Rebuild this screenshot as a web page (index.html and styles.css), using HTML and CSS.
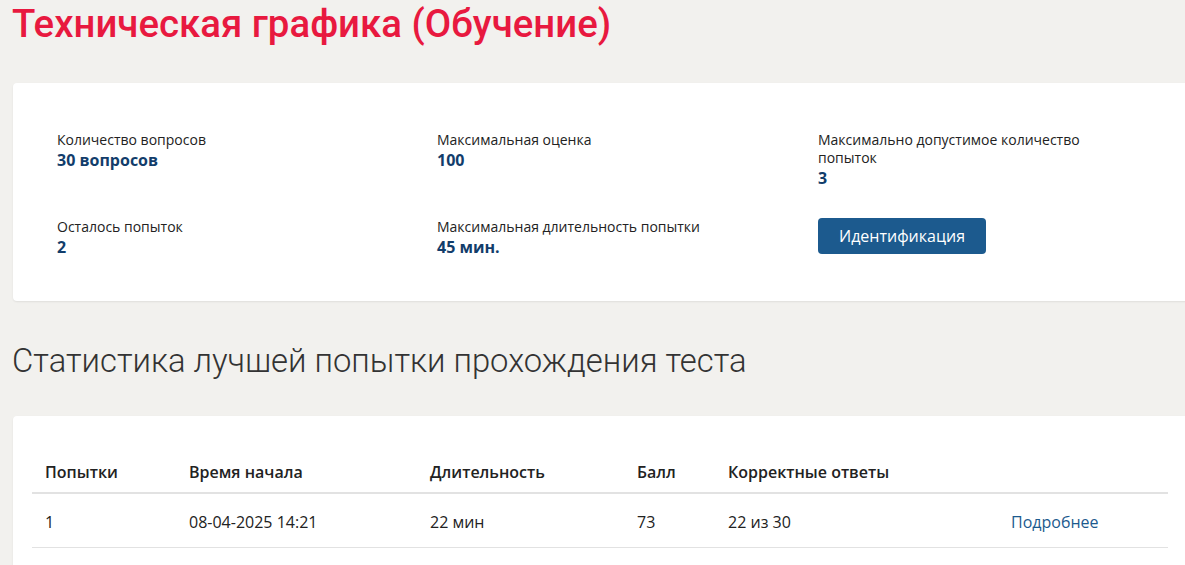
FILE: index.html
```html
<!DOCTYPE html>
<html lang="ru">
<head>
    <meta charset="UTF-8">
    <meta name="viewport" content="width=device-width, initial-scale=1.0">
    <title>Техническая графика (Обучение)</title>
    <link rel="stylesheet" href="styles.css">
</head>
<body>

    <h1 class="page-title">Техническая графика (Обучение)</h1>

    <div class="card info-card">
        <div class="info-grid">
            <div class="info-item">
                <div class="info-label">Количество вопросов</div>
                <div class="info-value">30 вопросов</div>
            </div>
            <div class="info-item">
                <div class="info-label">Максимальная оценка</div>
                <div class="info-value">100</div>
            </div>
            <div class="info-item">
                <div class="info-label">Максимально допустимое количество попыток</div>
                <div class="info-value">3</div>
            </div>
            <div class="info-item">
                <div class="info-label">Осталось попыток</div>
                <div class="info-value">2</div>
            </div>
            <div class="info-item">
                <div class="info-label">Максимальная длительность попытки</div>
                <div class="info-value">45 мин.</div>
            </div>
            <div class="info-item">
                <button class="btn">Идентификация</button>
            </div>
        </div>
    </div>

    <h2 class="section-title">Статистика лучшей попытки прохождения теста</h2>

    <div class="card table-card">
        <table class="stats">
            <thead>
                <tr>
                    <th class="c1">Попытки</th>
                    <th class="c2">Время начала</th>
                    <th class="c3">Длительность</th>
                    <th class="c4">Балл</th>
                    <th class="c5">Корректные ответы</th>
                    <th class="c6"></th>
                </tr>
            </thead>
            <tbody>
                <tr>
                    <td>1</td>
                    <td>08-04-2025 14:21</td>
                    <td>22 мин</td>
                    <td>73</td>
                    <td>22 из 30</td>
                    <td><a href="#">Подробнее</a></td>
                </tr>
            </tbody>
        </table>
    </div>

</body>
</html>
```

FILE: styles.css
```css
* { margin: 0; padding: 0; box-sizing: border-box; }
body { background: #f2f1ee; color: #222; font-family: 'Open Sans', sans-serif; padding: 0 0 0 12px; overflow: hidden; }

.page-title { font-family: 'Roboto', sans-serif; font-weight: 500; font-size: 38.4px; color: #e8193f; line-height: 48px; margin-bottom: 35px; }

.card { background: #fff; border-radius: 4px; margin-left: 1px; margin-right: -20px; box-shadow: 0 1px 2px rgba(0, 0, 0, 0.08); }

.info-card { padding: 48px 0 0 44px; height: 218px; }
.info-grid { display: grid; grid-template-columns: 380px 381px 300px; row-gap: 29px; }
.info-label { font-size: 14px; line-height: 18px; color: #222; max-width: 290px; }
.info-value { font-size: 16px; font-weight: bold; line-height: 22px; color: #123d6b; }

.btn { background: #1c5a8e; color: #fff; border: none; border-radius: 4px; font-family: 'Open Sans', sans-serif; font-size: 16px; padding: 0 20px; height: 36px; width: 168px; cursor: pointer; }

.section-title { font-family: 'Roboto', sans-serif; font-weight: 300; font-size: 32.8px; color: #333; line-height: 40px; margin: 40px 0 35px; }

.table-card { padding: 40px 17px 0 19px; height: 160px; }
.stats { border-collapse: collapse; width: 1136px; font-size: 16px; }
.stats th, .stats td { text-align: left; padding: 0 13px; }
.stats th { font-weight: 600; height: 37px; vertical-align: top; padding-top: 5px; border-bottom: 2px solid #e2e2e2; }
.stats td { height: 54px; padding-top: 3px; border-bottom: 1px solid #e2e2e2; }
.stats .c1 { width: 144px; }
.stats .c2 { width: 241px; }
.stats .c3 { width: 207px; }
.stats .c4 { width: 91px; }
.stats .c5 { width: 283px; }
.stats a { color: #1c5a8e; text-decoration: none; }
```
